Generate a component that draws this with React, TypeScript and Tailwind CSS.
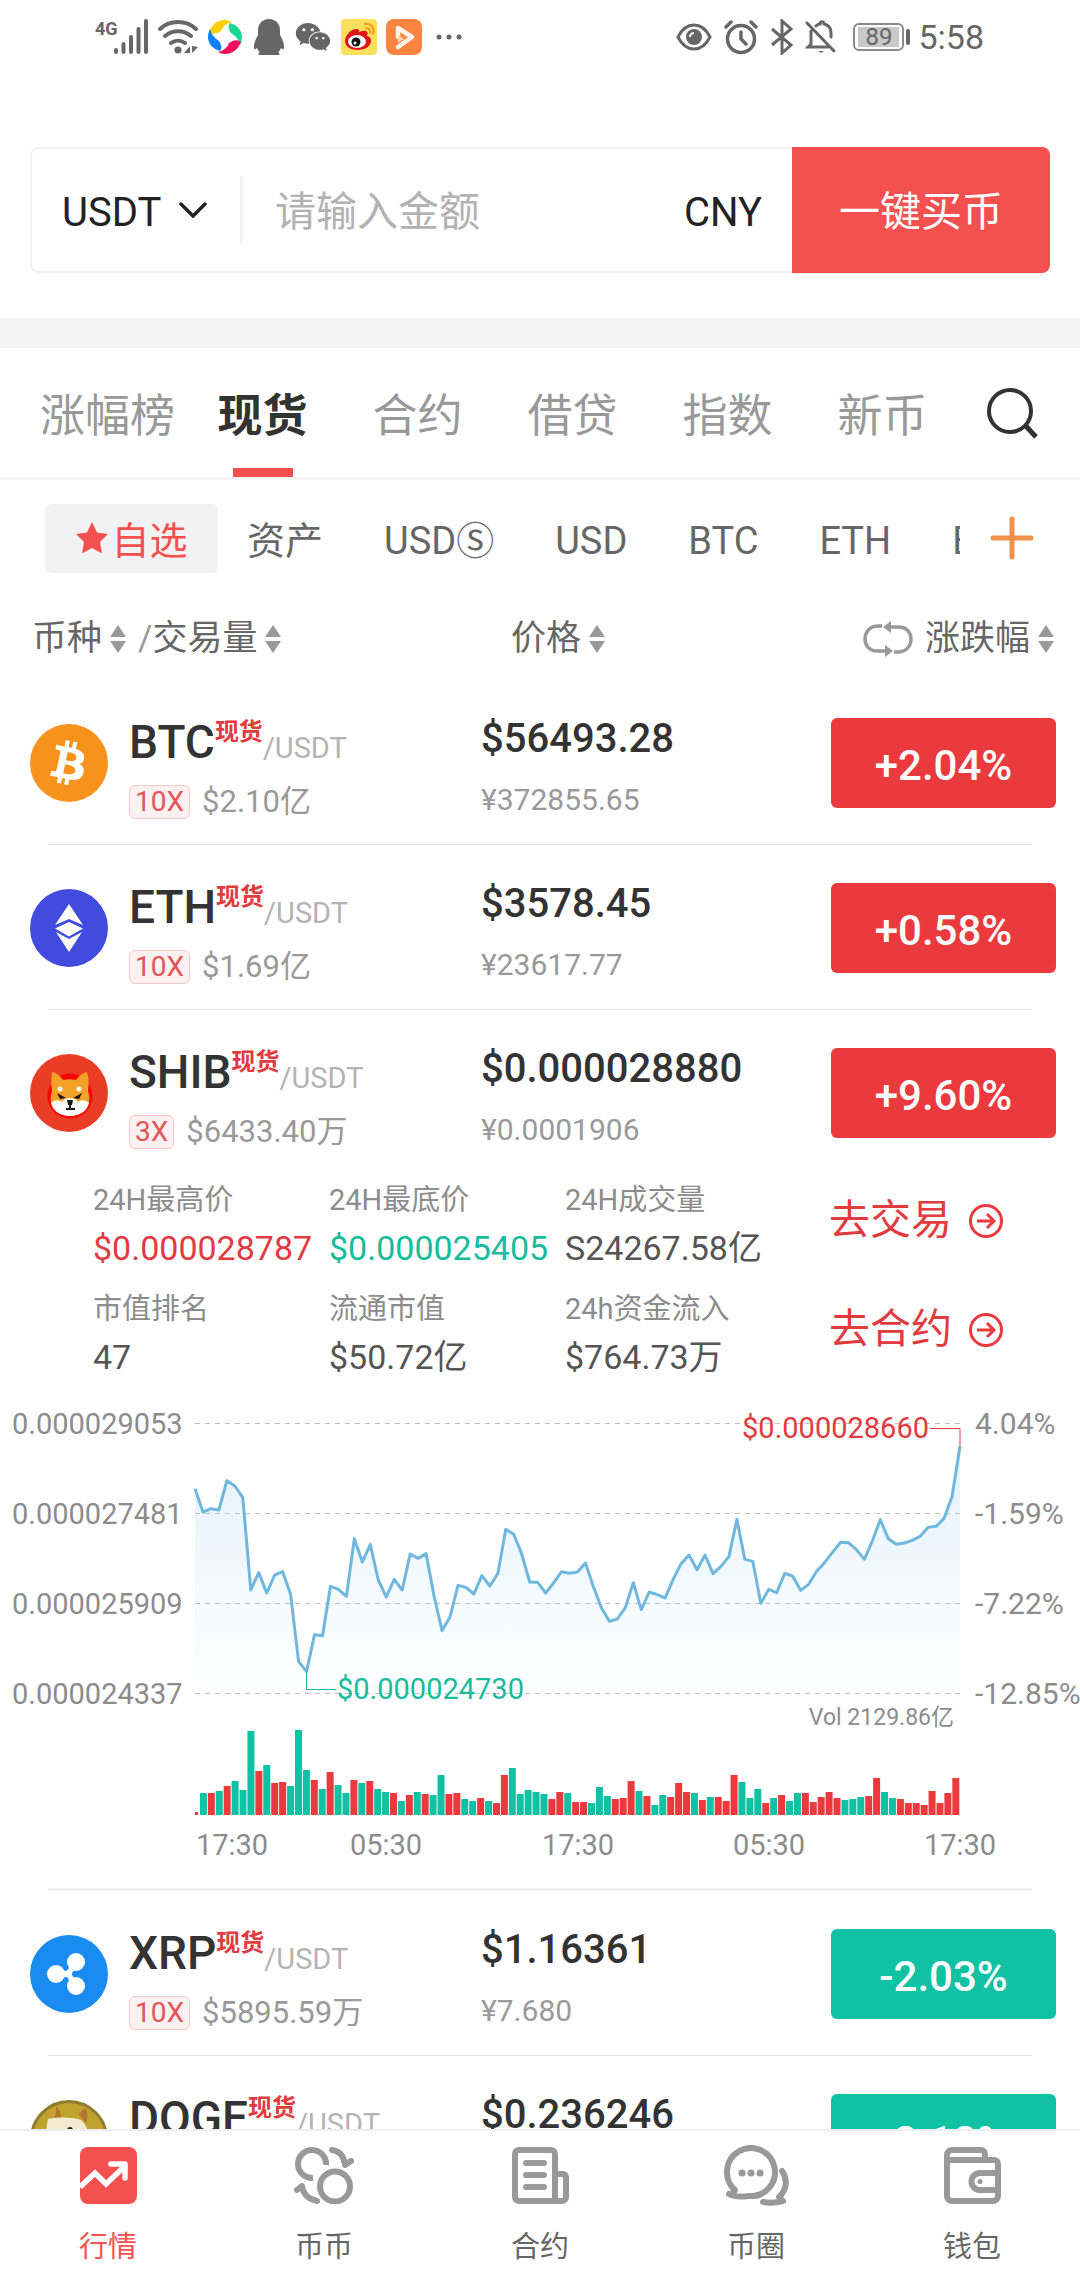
import type { ReactNode } from "react";
import { FaBtc, FaWeixin } from "react-icons/fa";

const tabs = ["涨幅榜", "现货", "合约", "借贷", "指数", "新币"];
const markets = ["资产", "USDⓈ", "USD", "BTC", "ETH", "EOS"];

const coins = [
  { symbol: "BTC", lever: "10X", volume: "$2.10亿", price: "$56493.28", cny: "¥372855.65", change: "+2.04%" },
  { symbol: "ETH", lever: "10X", volume: "$1.69亿", price: "$3578.45", cny: "¥23617.77", change: "+0.58%" },
  { symbol: "SHIB", lever: "3X", volume: "$6433.40万", price: "$0.000028880", cny: "¥0.0001906", change: "+9.60%" },
  { symbol: "XRP", lever: "10X", volume: "$5895.59万", price: "$1.16361", cny: "¥7.680", change: "-2.03%" },
  { symbol: "DOGE", lever: "10X", volume: "$1.02亿", price: "$0.236246", cny: "¥1.559", change: "-2.12%" },
];

type Coin = (typeof coins)[number];

const stats = [
  { label: "24H最高价", value: "$0.000028787", color: "text-[#e23b3f]" },
  { label: "24H最底价", value: "$0.000025405", color: "text-[#16bd9c]" },
  { label: "24H成交量", value: "S24267.58亿", color: "text-[#555555]" },
  { label: "市值排名", value: "47", color: "text-[#555555]" },
  { label: "流通市值", value: "$50.72亿", color: "text-[#555555]" },
  { label: "24h资金流入", value: "$764.73万", color: "text-[#555555]" },
];

const line = [
  293, 363, 353, 357, 269, 285, 320, 597, 545, 606, 552, 542, 610, 812, 841, 731, 734, 586, 595, 616, 443, 513, 460,
  567, 618, 565, 597, 489, 502, 488, 615, 719, 678, 583, 589, 609, 554, 585, 548, 415, 430, 489, 573, 574, 606, 576,
  542, 547, 543, 516, 587, 650, 691, 684, 650, 575, 656, 603, 611, 621, 565, 518, 492, 536, 492, 548, 526, 497, 385,
  505, 511, 637, 595, 605, 547, 555, 598, 580, 541, 515, 484, 454, 455, 476, 505, 450, 386, 443, 460, 456, 448, 436,
  409, 406, 382, 317, 166,
];

// positive = rising candle, negative = falling
const volumes = [
  3, -22, 22, -24, 29, -34, -25, -84, 44, -50, 32, 33, -29, -85, -45, 35, -26, 43, -30, -22, 35, -32, 34, -26, -23, 22,
  -14, 20, -23, 21, -20, -40, 21, 22, -16, -14, 17, -14, 12, 40, -47, -21, -25, -23, -21, 16, 23, -22, 13, 13, -12,
  -28, -19, 16, 17, 34, -24, 19, -10, -20, 18, 32, 23, -22, 15, -18, 18, 14, 40, -33, -17, -26, 12, -17, 20, -14, -22,
  22, 13, 18, 23, 17, -15, -16, -18, 19, 37, -23, -17, 16, 12, 12, 10, 24, 12, 22, 37,
];

function SortIcon() {
  return (
    <svg className="w-4 h-7 shrink-0" viewBox="0 0 16 28" fill="#999999">
      <path d="M8 0l8 12H0z M8 28l8-12H0z" />
    </svg>
  );
}

function StatusBar() {
  return (
    <div className="flex items-center h-[73px] pl-[95px] pr-24 text-[#666666]">
      <svg className="w-[54px] h-9" viewBox="0 0 54 36">
        <text x="0" y="16" fontSize="18" fontWeight="700" fill="#666666">4G</text>
        <path d="M22 32v2M29.500 26v8M37 19v15M44.500 11v23M52 3v31" stroke="#666666" strokeWidth="4" strokeLinecap="round" transform="translate(-1 -1)" />
      </svg>
      <svg className="w-10 h-9 ml-[9px]" viewBox="0 0 40 36" fill="none" stroke="#666666" strokeWidth="4" strokeLinecap="round">
        <path d="M2 10a27 27 0 0 1 36 0M7 17a20 20 0 0 1 26 0M13 24a12 12 0 0 1 14 0" />
        <circle cx="20" cy="31" r="3.500" fill="#666666" stroke="none" />
        <path d="M32 27v7h-6zM34 27v7l6-6z" fill="#666666" stroke="none" />
      </svg>
      <svg className="w-9 h-9 ml-[9px]" viewBox="0 0 36 36">
        <path d="M2 13C5 5 11 1 18 1c3 0 5 1 7 2-5 1-9 4-11 9-4 3-8 4-12 1z" fill="#fdd006" />
        <path d="M23 4c7 2 12 7 12 14 0 3-1 6-2 8-1-5-4-9-9-12-3-4-3-8-1-10z" fill="#16d995" />
        <path d="M34 23c-3 8-9 12-16 12-3 0-5-1-7-2 5-1 9-4 11-9 4-3 8-4 12-1z" fill="#f40f5b" />
        <path d="M13 32C6 30 1 25 1 18c0-3 1-6 2-8 1 5 4 9 9 12 3 4 3 8 1 10z" fill="#0b80fb" />
      </svg>
      <svg className="w-[30px] h-9 ml-[11px]" viewBox="0 0 30 36" fill="#666666">
        <path d="M15 0C8 0 4 5 4 11v5c-2 4-4 7-4 12 0 3 1 3 3 1 1 2 1 3 3 4-2 1-2 3 0 3h18c2 0 2-2 0-3 2-1 2-2 3-4 2 2 3 2 3-1 0-5-2-8-4-12v-5C26 5 22 0 15 0z" />
      </svg>
      <FaWeixin className="w-9 h-9 ml-[11px]" />
      <svg className="w-9 h-9 ml-[10px]" viewBox="0 0 36 36">
        <rect width="36" height="36" rx="4" fill="#fddf5c" />
        <path d="M4 22c0-7 8-13 12-12 3 0 2 3 2 3s4-2 7-1c3 2 1 4 1 5 4 1 4 4 4 5 0 5-6 9-13 9S4 28 4 22z" fill="#e1141c" />
        <ellipse cx="16" cy="22.500" rx="9" ry="6.500" fill="#ffffff" />
        <circle cx="15" cy="23" r="4.500" fill="#111111" />
        <circle cx="14" cy="24" r="1.500" fill="#ffffff" />
        <path d="M24 5c6-1 10 4 8 10M25 9c3 0 5 2 4 5" fill="none" stroke="#f39a1d" strokeWidth="2" strokeLinecap="round" />
      </svg>
      <svg className="w-9 h-9 ml-[9px]" viewBox="0 0 36 36">
        <rect width="36" height="36" rx="8" fill="#fb8540" />
        <path d="M12 18V9l14 9-14 10" fill="none" stroke="#fff3ea" strokeWidth="4.500" strokeLinejoin="round" strokeLinecap="round" />
        <path d="M12 16v8l6-4z" fill="#ffd0b0" />
      </svg>
      <svg className="w-[26px] h-1.5 ml-[14px]" viewBox="0 0 26 6" fill="#666666">
        <circle cx="3" cy="3" r="2.500" />
        <circle cx="13" cy="3" r="2.500" />
        <circle cx="23" cy="3" r="2.500" />
      </svg>
      <div className="flex-1" />
      <svg className="w-9 h-9" viewBox="0 0 36 36" fill="none" stroke="#666666" strokeWidth="3">
        <path d="M2 18C6 10 12 6 18 6s12 4 16 12c-4 8-10 12-16 12S6 26 2 18z" />
        <circle cx="18" cy="18" r="8" fill="#666666" stroke="none" />
        <path d="M14 18a4 4 0 0 1 4-4" stroke="#ffffff" strokeWidth="2" />
      </svg>
      <svg className="w-[34px] h-9 ml-3" viewBox="0 0 34 36" fill="none" stroke="#666666" strokeWidth="3.500" strokeLinecap="round">
        <circle cx="17" cy="20" r="13.500" />
        <path d="M17 13v7l5 5M2 8l5-5M32 8l-5-5" />
      </svg>
      <svg className="w-6 h-9 ml-3" viewBox="0 0 24 36" fill="none" stroke="#666666" strokeWidth="3">
        <path d="M2 10l19 16-9 8V2l9 8L2 26" />
      </svg>
      <svg className="w-8 h-9 ml-[11px]" viewBox="0 0 32 36" fill="none" stroke="#666666" strokeWidth="3" strokeLinecap="round">
        <path d="M6 12v13l-3 3h20M11 7c2-2 3-2 4-2 0-3 4-3 4 0 5 1 7 4 7 9v4M2 4l27 28" />
        <path d="M13 32h6l-3 2z" fill="#666666" stroke="none" />
      </svg>
      <div className="flex items-center ml-4">
        <div className="flex items-center justify-center w-[51px] h-7 p-[3px] border-2 border-[#8a8a8a] rounded-md">
          <span className="w-full bg-[#c8c8c8] text-[24px] leading-5 text-center">89</span>
        </div>
        <div className="w-1 h-4 ml-0.5 bg-[#666666] rounded-sm" />
      </div>
      <span className="ml-2 text-[34px] leading-9">5:58</span>
    </div>
  );
}

function QuickBuy() {
  return (
    <form className="flex h-[126px] mt-[74px] mb-[45px] mx-[30px] text-[#222222] text-[40px]">
      <div className="flex flex-1 min-w-0 items-center pt-1.5 px-[30px] border-2 border-r-0 border-[#f2f2f2] rounded-l-lg">
        <select aria-label="币种" className="appearance-none bg-transparent outline-none" defaultValue="USDT">
          <option>USDT</option>
        </select>
        <svg className="w-[30px] h-4 ml-[16px] mb-1.5 pointer-events-none" viewBox="0 0 30 16" fill="none" stroke="#222222" strokeWidth="3.500" strokeLinecap="round">
          <path d="M3 2l12 12L27 2" />
        </svg>
        <div className="w-[3px] h-[68px] ml-[32px] mb-1.5 bg-[#f2f2f2]" />
        <input
          aria-label="金额"
          placeholder="请输入金额"
          className="flex-1 min-w-0 ml-8 text-[41px] outline-none placeholder:text-[#b2b2b2]"
        />
        <span>CNY</span>
      </div>
      <button type="button" className="w-[258px] pt-1.5 bg-[#f4504f] text-white text-[41px] rounded-r-lg">
        一键买币
      </button>
    </form>
  );
}

function CoinIcon({ symbol }: { symbol: string }) {
  if (symbol === "BTC") {
    return (
      <div className="flex items-center justify-center size-[78px] rounded-full bg-[#f7931c]">
        <FaBtc className="size-[44px] text-white rotate-12" />
      </div>
    );
  }
  if (symbol === "ETH") {
    return (
      <svg className="size-[78px]" viewBox="0 0 78 78">
        <circle cx="39" cy="39" r="39" fill="#414bdd" />
        <path d="M39 15l14 21-14-6-14 6zM39 33l14 6.500-14 8-14-8zM26 43l13 7 13-7-13 20z" fill="#ffffff" />
      </svg>
    );
  }
  if (symbol === "SHIB") {
    return (
      <svg className="size-[78px]" viewBox="0 0 78 78">
        <circle cx="39" cy="39" r="39" fill="#ea3d26" />
        <circle cx="40" cy="42" r="22.500" fill="#ff0000" />
        <path d="M22 18c5 1 8 4 11 8 4-1 9-1 13 0 3-4 6-7 11-8 2 7 2 13 1 19 1 3 2 7 1 11-2 8-10 14-19 14s-17-6-19-14c-1-4 0-8 1-11-1-6-1-12 0-19z" fill="#f4a127" />
        <path d="M21 49c3-3 7-4 11-1 1-2 4-4 8-4s7 2 8 4c4-3 8-2 11 1-2 8-9 13-19 13s-17-5-19-13z" fill="#ffffff" />
        <circle cx="30" cy="35" r="2.500" fill="#ffffff" />
        <circle cx="49" cy="35" r="2.500" fill="#ffffff" />
        <path d="M27 39l9 5-6 1zM52 39l-9 5 6 1z" fill="#1b1410" />
        <path d="M37 46h6l-1 5h-4zM39 51h2v3h4v2h-9v-2h3z" fill="#1b1410" />
      </svg>
    );
  }
  if (symbol === "XRP") {
    return (
      <svg className="size-[78px]" viewBox="0 0 78 78">
        <circle cx="39" cy="39" r="39" fill="#1a8bf0" />
        <g fill="#ffffff">
          <circle cx="26" cy="39" r="9" />
          <circle cx="46" cy="27" r="9" />
          <circle cx="46" cy="51" r="9" />
          <path d="M31 33c4 5 8 3 8-2l6 4c-4 2-4 6 0 8l-6 4c0-5-4-7-8-2z" />
        </g>
      </svg>
    );
  }
  return (
    <svg className="size-[78px]" viewBox="0 0 78 78">
      <circle cx="39" cy="39" r="37.500" fill="#c0a32f" stroke="#8d7c2c" strokeWidth="3" />
      <path d="M26 7c4 3 5 7 5 12h-7c2-4 2-8 2-12zM49 14c3-5 6-6 7-5 2 3 2 8 0 14z" fill="#b3752c" />
      <path d="M18 19c10-2 24-2 33 1 7 5 9 18 8 32-4 10-12 16-24 16-10 0-19-8-20-20 1-10 1-20 3-29z" fill="#f3ead2" />
      <circle cx="40" cy="30" r="3" fill="#2e2419" />
      <circle cx="22" cy="31" r="2" fill="#2e2419" />
    </svg>
  );
}

function CoinRow({ coin }: { coin: Coin }) {
  const changeColor = coin.change.startsWith("-") ? "bg-[#10c1a3]" : "bg-[#ea3a3d]";
  return (
    <div className="grid grid-cols-[451fr_350fr_225px] items-start h-[164px] pt-[34px] pl-[30px] pr-6">
      <div className="flex items-start">
        <div className="shrink-0 mt-2.5">
          <CoinIcon symbol={coin.symbol} />
        </div>
        <div className="ml-[21px]">
          <div className="flex items-baseline h-14 leading-[56px]">
            <span className="text-[46px] font-medium text-[#333333]">{coin.symbol}</span>
            <span className="self-start text-[24px] leading-9 font-bold text-[#e23b3f]">现货</span>
            <span className="text-[29px] text-[#b3b3b3]">/USDT</span>
          </div>
          <div className="flex items-center gap-3 mt-[14px] h-9">
            <span className="h-[34px] px-[5px] text-[28px] leading-8 text-[#e2555a] bg-[#fdf0f0] border border-[#f3c9ca] rounded-md">
              {coin.lever}
            </span>
            <span className="text-[31px] text-[#999999]">{coin.volume}</span>
          </div>
        </div>
      </div>
      <div>
        <div className="text-[40px] leading-[50px] font-medium text-[#333333]">{coin.price}</div>
        <div className="mt-[18px] text-[30px] leading-9 text-[#999999]">{coin.cny}</div>
      </div>
      <button type="button" className={`h-[90px] mt-1 pt-1 rounded-md text-[42px] font-medium text-white ${changeColor}`}>
        {coin.change}
      </button>
    </div>
  );
}

function GoLink({ children }: { children: ReactNode }) {
  return (
    <a href="#" className="flex items-center gap-4 h-[90px] text-[41px] text-[#e23b3f]">
      {children}
      <svg className="size-9" viewBox="0 0 36 36" fill="none" stroke="#ea3a3d" strokeWidth="3">
        <circle cx="18" cy="18" r="15.500" />
        <path d="M9 18h17M19 11l7 7-7 7" />
      </svg>
    </a>
  );
}

function CoinDetail() {
  return (
    <div className="grid grid-cols-[708fr_250fr] pt-0.5 pl-[93px] pr-[29px]">
      <div className="grid grid-cols-3 gap-y-[13px]">
        {stats.map((s) => (
          <div key={s.label} className="whitespace-nowrap">
            <div className="text-[29px] leading-[48px] text-[#8c8c8c]">{s.label}</div>
            <div className={`text-[34px] leading-[48px] ${s.color}`}>{s.value}</div>
          </div>
        ))}
      </div>
      <div className="flex flex-col gap-[19px] pl-[28px]">
        <GoLink>去交易</GoLink>
        <GoLink>去合约</GoLink>
      </div>
    </div>
  );
}

function PriceChart() {
  const left = 195;
  const width = 765;
  const base = 424;
  const step = width / (line.length - 1);
  const points = line.map((v, i) => `${left + i * step},${v / 3}`).join(" ");
  const grid = [
    { y: 32.5, price: "0.000029053", pct: "4.04%" },
    { y: 122.5, price: "0.000027481", pct: "-1.59%" },
    { y: 212.5, price: "0.000025909", pct: "-7.22%" },
    { y: 302.5, price: "0.000024337", pct: "-12.85%" },
  ];
  const times = [
    { x: 232, label: "17:30" },
    { x: 386, label: "05:30" },
    { x: 578, label: "17:30" },
    { x: 769, label: "05:30" },
    { x: 960, label: "17:30" },
  ];
  return (
    <svg className="block w-full" viewBox="0 -10 1080 507" fill="#8c8c8c">
      <defs>
        <linearGradient id="area" x1="0" y1="0" x2="0" y2="1">
          <stop offset="0" stopColor="#e4f2fd" />
          <stop offset="1" stopColor="#ffffff" />
        </linearGradient>
      </defs>
      <polygon points={`${left},302 ${points} ${left + width},302`} fill="url(#area)" />
      {grid.map((g) => (
        <g key={g.y}>
          <line x1={left} x2={left + width} y1={g.y} y2={g.y} stroke="#bfbfbf" strokeDasharray="5 5" />
          <text x="12" y={g.y + 10} fontSize="29">{g.price}</text>
          <text x="975" y={g.y + 10} fontSize="30">{g.pct}</text>
        </g>
      ))}
      <polyline points={points} fill="none" stroke="#70b7dd" strokeWidth="3" strokeLinejoin="round" />
      <path d="M306.500 280v18.500h30" fill="none" stroke="#16bd9c" />
      <text x="337" y="308" fontSize="29" fill="#16bd9c">$0.000024730</text>
      <path d="M930 37.500h30v18" fill="none" stroke="#e23b3f" />
      <text x="929" y="47" fontSize="29" textAnchor="end" fill="#e23b3f">$0.000028660</text>
      <text x="954" y="334" fontSize="23" textAnchor="end">Vol 2129.86亿</text>
      {volumes.map((v, i) => (
        <rect
          key={i}
          x={i === 0 ? left : left - 3 + i * 7.92}
          y={base - Math.abs(v)}
          width={i === 0 ? 3 : 7}
          height={Math.abs(v)}
          fill={v > 0 ? "#ea3a3d" : "#10c1a3"}
        />
      ))}
      {times.map((t) => (
        <text key={t.x} x={t.x} y="464" fontSize="29" textAnchor="middle">{t.label}</text>
      ))}
    </svg>
  );
}

const navItems = [
  {
    label: "行情",
    icon: (
      <svg className="h-[57px] w-[57px]" viewBox="0 0 57 57" fill="none">
        <rect width="57" height="57" rx="8" fill="#f4504f" />
        <path d="M0 40l15-14 11 11 20-19" stroke="#ffffff" strokeWidth="5.500" />
        <path d="M31 17h14v14" stroke="#ffffff" strokeWidth="5.500" strokeLinecap="round" strokeLinejoin="round" />
      </svg>
    ),
  },
  {
    label: "币币",
    icon: (
      <svg className="h-[57px] w-[60px]" viewBox="0 0 60 57" fill="none" stroke="#999999" strokeWidth="6">
        <circle cx="41" cy="39.500" r="15" />
        <path d="M32 18a14 14 0 1 0-13 13" />
        <path d="M38 3c8 1 12 7 13 15l6-4" strokeLinecap="round" strokeLinejoin="round" />
        <path d="M23 54C14 52 9 47 8 39l-5 4" strokeLinecap="round" strokeLinejoin="round" />
      </svg>
    ),
  },
  {
    label: "合约",
    icon: (
      <svg className="h-[57px] w-[57px]" viewBox="0 0 57 57" fill="none" stroke="#999999" strokeWidth="6">
        <path d="M43 54V7a4 4 0 0 0-4-4H7a4 4 0 0 0-4 4v43a4 4 0 0 0 4 4h43a4 4 0 0 0 4-4V30a3 3 0 0 0-3-3h-8" />
        <path d="M14 16h18M14 28h18M14 40h18" strokeLinecap="round" />
      </svg>
    ),
  },
  {
    label: "币圈",
    icon: (
      <svg className="h-[61px] w-[67px]" viewBox="0 0 67 61" fill="none" stroke="#999999" strokeWidth="6" strokeLinecap="round" strokeLinejoin="round">
        <path d="M6 49c3 0 5-1 6-4A24 24 0 1 1 26 51c-8 1-15 1-20-2z" />
        <path d="M59 26c5 7 6 18-3 26l4 4c-7 2-14 2-20 1" />
        <path d="M19 28h.1M28 28h.1M37 28h.1" strokeWidth="7" />
      </svg>
    ),
  },
  {
    label: "钱包",
    icon: (
      <svg className="h-[57px] w-[57px]" viewBox="0 0 57 57" fill="none" stroke="#999999" strokeWidth="6">
        <path d="M3 13V8a5 5 0 0 1 5-5h29a4 4 0 0 1 4 4v6M3 13h47a4 4 0 0 1 4 4v32a5 5 0 0 1-5 5H8a5 5 0 0 1-5-5z" />
        <path d="M54 26H36a8.500 8.500 0 0 0 0 17h18" />
        <circle cx="36" cy="34.500" r="2.500" fill="#999999" stroke="none" />
      </svg>
    ),
  },
];

export default function App() {
  return (
    <div className="flex flex-col h-screen overflow-hidden bg-white font-[Roboto,'Noto_Sans_CJK_SC',sans-serif]">
      <StatusBar />
      <QuickBuy />
      <div className="shrink-0 h-[30px] bg-[#f4f4f4]" />

      {/* Market tabs */}
      <div className="flex shrink-0 h-[132px] pl-[30px] pr-4 border-b-3 border-[#f4f4f4]">
        {tabs.map((tab) => (
          <button
            key={tab}
            type="button"
            className={`relative flex-1 pt-2 text-[45px] whitespace-nowrap ${
              tab === "现货" ? "font-bold text-[#333333]" : "text-[#999999]"
            }`}
          >
            {tab}
            {tab === "现货" && (
              <span className="absolute bottom-0 left-1/2 -translate-x-1/2 w-[60px] h-[9px] bg-[#f4504f]" />
            )}
          </button>
        ))}
        <button type="button" aria-label="搜索" className="flex items-center justify-center w-[104px]">
          <svg className="size-[52px]" viewBox="0 0 52 52" fill="none" stroke="#333333" strokeWidth="4">
            <circle cx="24" cy="24" r="21" />
            <path d="M39 38l11 12" strokeWidth="5" />
          </svg>
        </button>
      </div>

      {/* Quote currencies */}
      <div className="flex shrink-0 items-center h-[116px] pl-[45px] pr-[46px] text-[38px] text-[#666666]">
        <button
          type="button"
          className="flex shrink-0 items-center justify-center w-[173px] h-[69px] mr-[29px] bg-[#f2f2f2] rounded-md text-[#f4504f]"
        >
          <svg className="size-[34px] mr-0.5" viewBox="0 0 34 34" fill="#f4504f">
            <path d="M17 1l5 10.500 11 1.500-8 8 2 11.500-10-5.500-10 5.500 2-11.500-8-8 11-1.500z" />
          </svg>
          <span className="pt-1.5">自选</span>
        </button>
        <div className="flex flex-1 min-w-0 gap-[61px] pt-1.5 overflow-hidden whitespace-nowrap">
          {markets.map((m) => (
            <button key={m} type="button">{m}</button>
          ))}
        </div>
        <button type="button" aria-label="添加" className="ml-[30px]">
          <svg className="size-11" viewBox="0 0 44 44" stroke="#f0904a" strokeWidth="5" strokeLinecap="round">
            <path d="M22 3v38M3 22h38" />
          </svg>
        </button>
      </div>

      {/* Column heads */}
      <div className="grid shrink-0 grid-cols-[479fr_240fr_303fr] items-center h-[84px] pt-0.5 pl-8 pr-[26px] text-[35px] text-[#666666]">
        <div className="flex items-center">
          <button type="button" className="flex items-center gap-2">币种<SortIcon /></button>
          <span className="ml-3 text-[#999999]">/</span>
          <button type="button" className="flex items-center gap-2">交易量<SortIcon /></button>
        </div>
        <button type="button" className="flex items-center gap-2">价格<SortIcon /></button>
        <div className="flex items-center justify-end gap-3">
          <svg className="w-[50px] h-9" viewBox="0 0 50 36" fill="none" stroke="#999999" strokeWidth="3.500">
            <path d="M19 5h-4C7 5 2 11 2 18s5 12 12 12h12M31 31h4c8 0 13-6 13-13S43 6 36 6H24" />
            <path d="M22 24l8 6-8 6zM28 0l-8 6 8 6z" fill="#999999" stroke="none" />
          </svg>
          <button type="button" className="flex items-center gap-2">涨跌幅<SortIcon /></button>
        </div>
      </div>

      <main className="flex-1 min-h-0 overflow-y-auto [scrollbar-width:none]">
        {coins.map((coin) => (
          <section key={coin.symbol}>
            <CoinRow coin={coin} />
            {coin.symbol === "SHIB" ? (
              <>
                <CoinDetail />
                <PriceChart />
                <div className="h-[3px] mx-12 bg-[#f0f0f0]" />
              </>
            ) : (
              <div className="h-px mx-12 bg-[#e0e0e0]" />
            )}
          </section>
        ))}
      </main>

      <nav className="grid shrink-0 grid-cols-5 h-[151px] border-t-2 border-[#eeeeee] bg-white">
        {navItems.map((item) => (
          <a
            key={item.label}
            href="#"
            className={`flex flex-col items-center pt-[13px] text-[29px] leading-10 ${
              item.label === "行情" ? "text-[#f4504f]" : "text-[#666666]"
            }`}
          >
            <span className="flex items-center h-[63px]">{item.icon}</span>
            <span className="mt-5">{item.label}</span>
          </a>
        ))}
      </nav>
    </div>
  );
}
